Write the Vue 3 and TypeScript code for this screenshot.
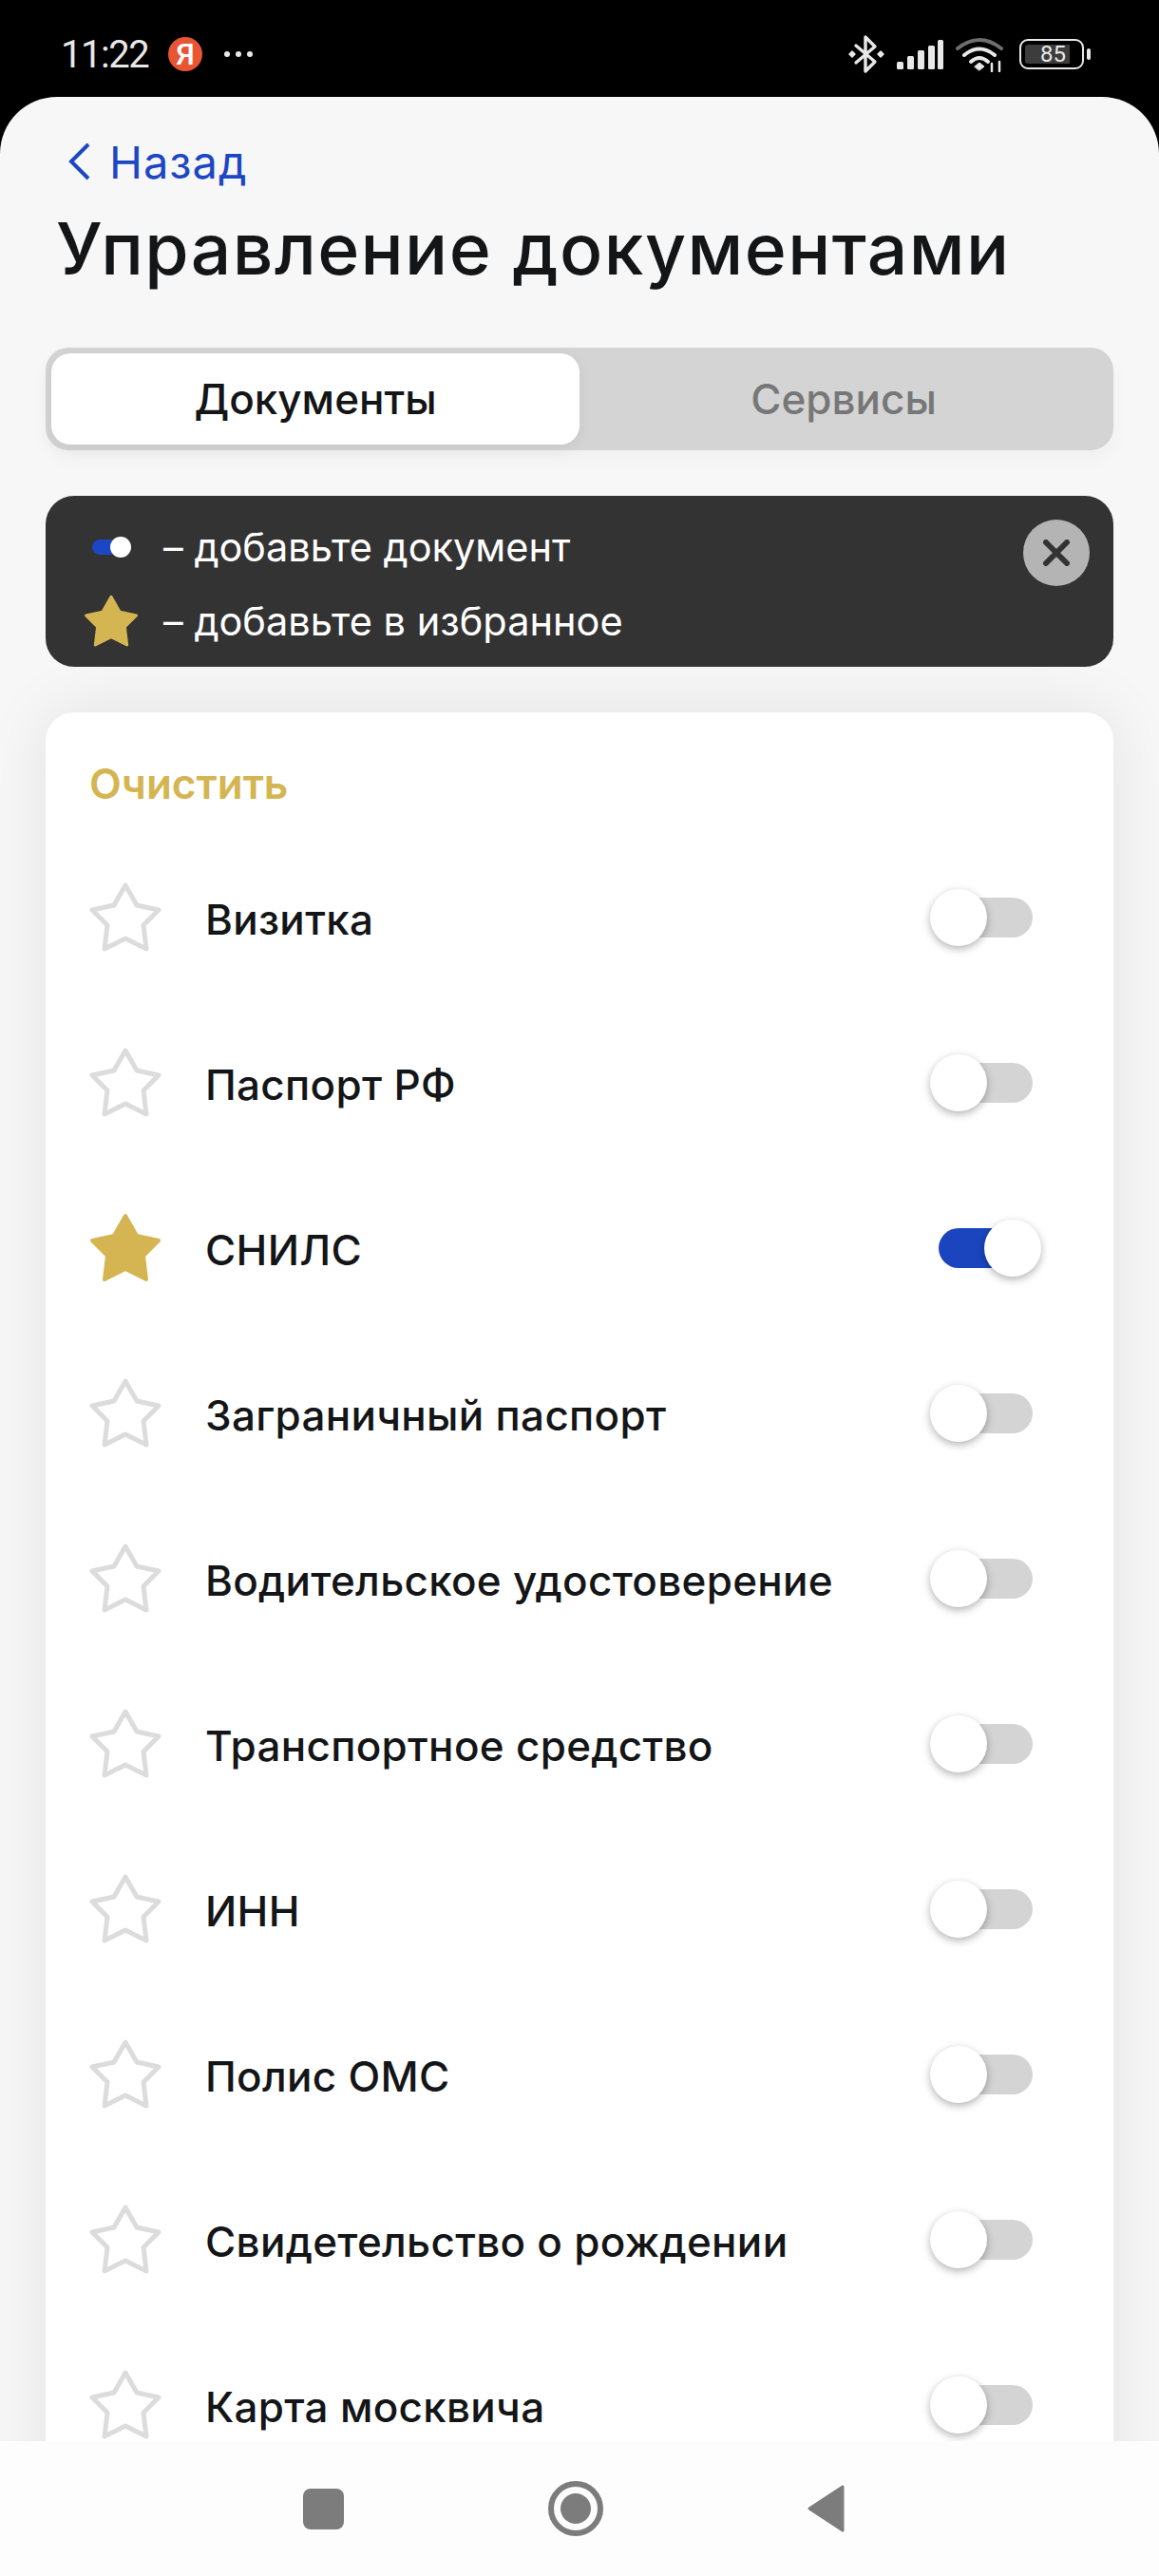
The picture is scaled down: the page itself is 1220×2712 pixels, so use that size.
<script setup lang="ts">
import { ref } from "vue";

type DocRow = { name: string; favorite: boolean; enabled: boolean };

const docs = ref<DocRow[]>([
  { name: "Визитка", favorite: false, enabled: false },
  { name: "Паспорт РФ", favorite: false, enabled: false },
  { name: "СНИЛС", favorite: true, enabled: true },
  { name: "Заграничный паспорт", favorite: false, enabled: false },
  { name: "Водительское удостоверение", favorite: false, enabled: false },
  { name: "Транспортное средство", favorite: false, enabled: false },
  { name: "ИНН", favorite: false, enabled: false },
  { name: "Полис ОМС", favorite: false, enabled: false },
  { name: "Свидетельство о рождении", favorite: false, enabled: false },
  { name: "Карта москвича", favorite: false, enabled: false },
]);

const starPath = "M38 3 L50 24 L73 29 L57 45 L60 70 L38 59 L16 70 L19 45 L3 29 L26 24 Z";
</script>

<template>
  <div class="screen">
    <header class="status">
      <div class="status-left">
        <span class="time">11:22</span>
        <span class="ya">Я</span>
        <svg class="dots" width="32" height="8" viewBox="0 0 32 8"><circle cx="4" cy="4" r="3" /><circle cx="16" cy="4" r="3" /><circle cx="28" cy="4" r="3" /></svg>
      </div>
      <div class="status-right">
        <svg width="38" height="42" viewBox="0 0 38 42" fill="none" stroke="#e8e8e8" stroke-width="3.4" stroke-linecap="round" stroke-linejoin="round">
          <path d="M8 12 L28 29 L18 39 V3 L28 13 L8 30" />
          <path d="M1 21 L4 18 L7 21 L4 24 Z M31 21 L34 18 L37 21 L34 24 Z" fill="#e8e8e8" stroke-width="1.5" />
        </svg>
        <svg width="49" height="31" viewBox="0 0 49 31" fill="#e8e8e8">
          <rect x="0" y="23" width="7" height="8" rx="1.5" />
          <rect x="11" y="17" width="7" height="14" rx="1.5" />
          <rect x="22" y="11" width="7" height="20" rx="1.5" />
          <rect x="33" y="6" width="7" height="25" rx="1.5" />
          <rect x="43" y="0" width="6" height="31" rx="1.5" />
        </svg>
        <svg width="50" height="37" viewBox="0 0 50 37" fill="none" stroke-linecap="round">
          <path d="M2 12 Q25 -6 48 12" stroke="#6e6e6e" stroke-width="4" />
          <path d="M9 19 Q25 6 41 19" stroke="#e8e8e8" stroke-width="4" />
          <path d="M16 26 Q25 18 34 26" stroke="#e8e8e8" stroke-width="4" />
          <path d="M20 31 L25 27 L30 31 L25 35 Z" fill="#e8e8e8" stroke="#e8e8e8" stroke-width="1" />
          <path d="M38 28 V36 M46 26 V36" stroke="#e8e8e8" stroke-width="2.5" />
        </svg>
        <div class="battery">
          <div class="battery-body"><span>85</span></div>
          <div class="battery-nub"></div>
        </div>
      </div>
    </header>

    <main class="page">
      <a class="back">
        <svg width="24" height="40" viewBox="0 0 24 40" fill="none" stroke="#1c47c4" stroke-width="4"><path d="M21 2 L3 20 L21 38" /></svg>
        <span>Назад</span>
      </a>
      <h1 class="title">Управление документами</h1>

      <div class="tabs">
        <div class="tab active">Документы</div>
        <div class="tab">Сервисы</div>
      </div>

      <section class="hint">
        <div class="hint-row">
          <div class="hint-icon"><span class="mini-toggle"><i></i></span></div>
          <span>– добавьте документ</span>
        </div>
        <div class="hint-row">
          <div class="hint-icon">
            <svg width="58" height="56" viewBox="0 0 76 74"><path :d="starPath" fill="#d4b552" stroke="#d4b552" stroke-width="4" stroke-linejoin="round" /></svg>
          </div>
          <span>– добавьте в избранное</span>
        </div>
        <button class="close">
          <svg width="28" height="28" viewBox="0 0 28 28" stroke="#333" stroke-width="6" stroke-linecap="round"><path d="M3 3 L25 25 M25 3 L3 25" /></svg>
        </button>
      </section>

      <section class="card">
        <div class="clear">Очистить</div>
        <div v-for="doc in docs" :key="doc.name" class="doc">
          <svg class="star" width="76" height="74" viewBox="0 0 76 74">
            <path v-if="doc.favorite" :d="starPath" fill="#d4b552" stroke="#d4b552" stroke-width="4" stroke-linejoin="round" />
            <path v-else :d="starPath" fill="none" stroke="#dcdcdc" stroke-width="5" stroke-linejoin="round" />
          </svg>
          <span class="doc-name">{{ doc.name }}</span>
          <div class="toggle" :class="{ on: doc.enabled }"><i></i></div>
        </div>
      </section>
    </main>

    <nav class="nav">
      <span class="nav-square"></span>
      <span class="nav-circle"><i></i></span>
      <svg width="40" height="50" viewBox="0 0 40 50"><path d="M2 25 L37 2 V48 Z" fill="#7c7c7c" stroke="#7c7c7c" stroke-width="3" stroke-linejoin="round" /></svg>
    </nav>
  </div>
</template>

<style scoped>
.screen {
  width: 1220px;
  height: 2712px;
  display: flex;
  flex-direction: column;
  overflow: hidden;
  background: #000;
  font-family: Inter, "Liberation Sans", sans-serif;
  color: #141517;
}

.status {
  height: 102px;
  flex: none;
  display: flex;
  justify-content: space-between;
  align-items: center;
  padding: 0 72px 0 64px;
  box-sizing: border-box;
  color: #e8e8e8;
}
.status-left {
  display: flex;
  align-items: center;
  margin-top: 12px;
}
.time {
  font-family: Roboto, sans-serif;
  font-size: 40px;
  letter-spacing: -1.5px;
  width: 113px;
}
.ya {
  width: 36px;
  height: 36px;
  border-radius: 50%;
  background: #e85533;
  color: #fff;
  font-family: Roboto, sans-serif;
  font-size: 32px;
  font-weight: 500;
  line-height: 36px;
  text-align: center;
  margin-right: 22px;
}
.dots {
  fill: #e8e8e8;
}
.status-right {
  display: flex;
  align-items: center;
  gap: 13px;
  margin-top: 12px;
}
.battery {
  display: flex;
  align-items: center;
  gap: 3px;
  margin-left: 4px;
}
.battery-body {
  width: 68px;
  height: 32px;
  box-sizing: border-box;
  border: 2.5px solid #e8e8e8;
  border-radius: 9px;
  padding: 4px;
  display: flex;
}
.battery-body span {
  width: 43px;
  background: #3c3c3c;
  border-radius: 3px 0 0 3px;
  font-family: Roboto, sans-serif;
  font-size: 24px;
  line-height: 20px;
  text-align: right;
  padding-right: 4px;
}
.battery-nub {
  width: 4px;
  height: 12px;
  border-radius: 2px;
  background: #e8e8e8;
}

.page {
  flex: 1;
  min-height: 0;
  overflow: hidden;
  background: #f7f7f7;
  border-radius: 60px 60px 0 0;
  padding: 46px 48px 0;
  box-sizing: border-box;
}
.back {
  display: flex;
  align-items: center;
  gap: 19px;
  height: 44px;
  padding-left: 24px;
  color: #1c47c4;
  font-size: 47px;
  letter-spacing: 1px;
}
.title {
  margin: 26px 0 0 11px;
  font-size: 75px;
  letter-spacing: 1.4px;
  line-height: 88px;
  font-weight: 500;
}

.tabs {
  margin-top: 60px;
  height: 108px;
  padding: 6px;
  box-sizing: border-box;
  background: #d4d4d4;
  border-radius: 24px;
  display: grid;
  grid-template-columns: 556px 1fr;
  box-shadow: 0 10px 20px rgba(0, 0, 0, 0.03);
}
.tab {
  display: flex;
  align-items: center;
  justify-content: center;
  font-size: 44px;
  font-weight: 500;
  color: #777;
}
.tab.active {
  background: #fff;
  color: #141517;
  border-radius: 20px;
  box-shadow: 0 4px 16px rgba(0, 0, 0, 0.06);
}

.hint {
  position: relative;
  margin-top: 48px;
  height: 180px;
  background: #333;
  border-radius: 30px;
  padding: 15px 0 0 40px;
  box-sizing: border-box;
  color: #fff;
  font-size: 41.5px;
}
.hint-row {
  display: flex;
  align-items: center;
  height: 78px;
}
.hint-icon {
  width: 58px;
  margin-right: 26px;
  display: flex;
  justify-content: center;
}
.mini-toggle {
  position: relative;
  width: 41px;
  height: 16px;
  display: block;
  background: #1c47c4;
  border-radius: 8px;
}
.mini-toggle i {
  position: absolute;
  right: 0;
  top: -3px;
  width: 22px;
  height: 22px;
  border-radius: 50%;
  background: #fff;
}
.close {
  position: absolute;
  top: 25px;
  right: 25px;
  width: 70px;
  height: 70px;
  border: none;
  border-radius: 50%;
  background: #b4b4b4;
  padding: 0;
  display: flex;
  align-items: center;
  justify-content: center;
}

.card {
  margin-top: 48px;
  background: #fff;
  border-radius: 30px;
  padding: 50px 46px 200px;
  box-shadow: 0 0 70px rgba(0, 0, 0, 0.09);
}
.clear {
  color: #d4b552;
  font-size: 44px;
  font-weight: 600;
  line-height: 50px;
  margin-bottom: 29px;
}
.doc {
  height: 174px;
  display: flex;
  align-items: center;
}
.star {
  flex: none;
  margin-right: 46px;
}
.doc-name {
  flex: 1;
  font-size: 44px;
  letter-spacing: 0.3px;
  font-weight: 500;
  margin-top: 4px;
}
.toggle {
  position: relative;
  width: 108px;
  height: 42px;
  flex: none;
  margin-right: 39px;
}
.toggle::before {
  content: "";
  position: absolute;
  inset: 0 0 0 20px;
  background: #d4d4d4;
  border-radius: 21px;
}
.toggle i {
  position: absolute;
  left: 0;
  top: -9px;
  width: 60px;
  height: 60px;
  border-radius: 50%;
  background: #fff;
  box-shadow: 0 3px 8px rgba(0, 0, 0, 0.3);
}
.toggle.on::before {
  inset: 0 20px 0 9px;
  background: #1b45bf;
}
.toggle.on i {
  left: 57px;
}

.nav {
  height: 142px;
  flex: none;
  background: #fdfdfd;
  display: flex;
  align-items: center;
  position: relative;
  padding-left: 319px;
  box-sizing: border-box;
}
.nav-square {
  width: 43px;
  height: 43px;
  border-radius: 8px;
  background: #7c7c7c;
  margin-right: 215px;
}
.nav-circle {
  width: 58px;
  height: 58px;
  box-sizing: border-box;
  border: 6px solid #7c7c7c;
  border-radius: 50%;
  display: flex;
  align-items: center;
  justify-content: center;
  margin-right: 215px;
}
.nav-circle i {
  width: 32px;
  height: 32px;
  border-radius: 50%;
  background: #7c7c7c;
}
</style>
